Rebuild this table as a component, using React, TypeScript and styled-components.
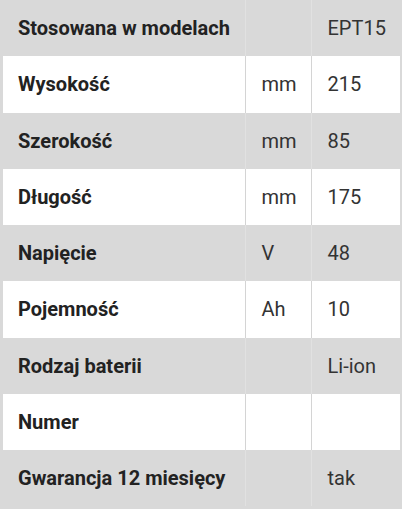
import styled, { createGlobalStyle } from "styled-components";

const rows = [
  { label: "Stosowana w modelach", unit: "", value: "EPT15" },
  { label: "Wysokość", unit: "mm", value: "215" },
  { label: "Szerokość", unit: "mm", value: "85" },
  { label: "Długość", unit: "mm", value: "175" },
  { label: "Napięcie", unit: "V", value: "48" },
  { label: "Pojemność", unit: "Ah", value: "10" },
  { label: "Rodzaj baterii", unit: "", value: "Li-ion" },
  { label: "Numer", unit: "", value: "" },
  { label: "Gwarancja 12 miesięcy", unit: "", value: "tak" },
];

const GlobalStyle = createGlobalStyle`
  body {
    margin: 0;
    background: #ffffff;
    font-family: Roboto, "Liberation Sans", sans-serif;
  }
`;

const Frame = styled.div`
  width: 402px;
  height: 509px;
  background: #d9d9d9;
  padding: 0 2px 0 3px;
  box-sizing: border-box;
`;

const Table = styled.table`
  width: 397px;
  border-collapse: collapse;
  table-layout: fixed;
`;

const Row = styled.tr<{ $shaded: boolean }>`
  height: 56.25px;
  background: ${(p) => (p.$shaded ? "#d9d9d9" : "#ffffff")};

  td {
    box-sizing: border-box;
    font-size: 20px;
    border-left: 1px solid ${(p) => (p.$shaded ? "#e1e1e1" : "#d4d4d4")};
  }
`;

const Label = styled.td`
  width: 242px;
  padding: 0 0 0 15px;
  font-weight: 700;
  color: #222222;
  white-space: nowrap;
  && {
    border-left: none;
  }
`;

const Unit = styled.td`
  width: 66px;
  padding: 0 0 0 16px;
  color: #333333;
`;

const Value = styled.td`
  padding: 0 0 0 16px;
  color: #333333;
`;

export default function App() {
  return (
    <>
      <GlobalStyle />
      <Frame>
        <Table>
          <tbody>
            {rows.map((row, i) => (
              <Row key={row.label} $shaded={i % 2 === 0}>
                <Label>{row.label}</Label>
                <Unit>{row.unit}</Unit>
                <Value>{row.value}</Value>
              </Row>
            ))}
          </tbody>
        </Table>
      </Frame>
    </>
  );
}
